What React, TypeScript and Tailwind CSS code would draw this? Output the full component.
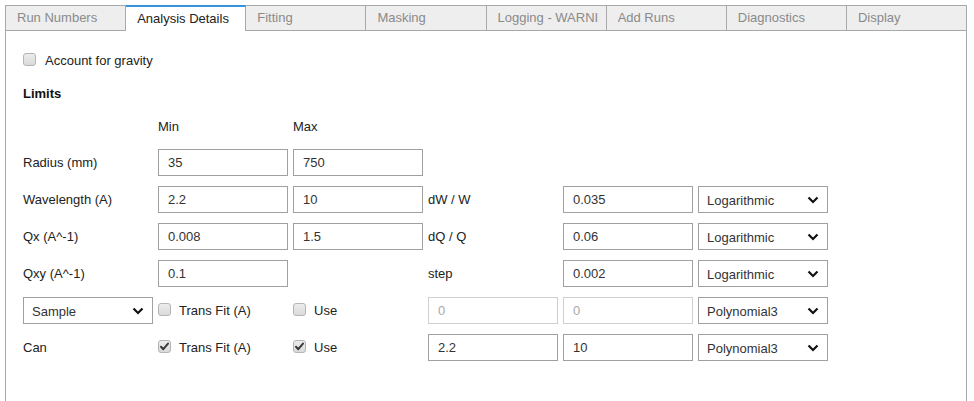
import React from "react";

/* ─── Data ───────────────────────────────────── */

const tabs = [
  "Run Numbers",
  "Analysis Details",
  "Fitting",
  "Masking",
  "Logging - WARNING",
  "Add Runs",
  "Diagnostics",
  "Display",
];

const ACTIVE = 1;

/* ─── Controls ───────────────────────────────── */

function Check({ checked = false }: { checked?: boolean }) {
  return (
    <span className="relative -mt-[3px] block h-[13px] w-[13px] shrink-0 rounded-[3px] border border-[#b4b4b4] bg-gradient-to-b from-[#ececec] to-[#dadada]">
      {checked && (
        <svg
          viewBox="0 0 13 13"
          className="absolute -left-px -top-px h-[13px] w-[13px]"
          aria-hidden
        >
          <path
            d="M3 6.8 L5.3 9.2 L10 3.6"
            fill="none"
            stroke="#3a3a3a"
            strokeWidth="2"
            strokeLinecap="round"
            strokeLinejoin="round"
          />
        </svg>
      )}
    </span>
  );
}

function Field({ value, disabled = false }: { value: string; disabled?: boolean }) {
  return (
    <div
      className={
        disabled
          ? "flex h-[27px] w-[130px] items-center border border-[#cfcfcf] bg-white pl-[9px] text-[13px] text-[#a8a8a8]"
          : "flex h-[27px] w-[130px] items-center border border-[#a0a0a0] bg-white pl-[9px] text-[13px] text-[#333]"
      }
    >
      {value}
    </div>
  );
}

function Select({ value }: { value: string }) {
  return (
    <div className="flex h-[27px] w-[130px] items-center justify-between border border-[#a0a0a0] bg-white pl-[8px] pr-[8px] text-[13px] text-[#333]">
      <span className="pt-[2px]">{value}</span>
      <svg viewBox="0 0 12 8" className="h-[8px] w-[12px]" aria-hidden>
        <path
          d="M1.5 1.5 L6 6 L10.5 1.5"
          fill="none"
          stroke="#111"
          strokeWidth="2.2"
        />
      </svg>
    </div>
  );
}

function Label({ children }: { children: React.ReactNode }) {
  return <div className="flex h-[27px] items-center text-[13px] text-[#222]">{children}</div>;
}

function CheckLabel({ text, checked = false }: { text: string; checked?: boolean }) {
  return (
    <div className="flex h-[27px] items-center gap-[8px] text-[13px] text-[#222]">
      <Check checked={checked} />
      <span>{text}</span>
    </div>
  );
}

/* ─── App ────────────────────────────────────── */

export default function App() {
  return (
    <div className="h-[401px] w-[974px] overflow-hidden bg-white px-[5px] pt-[5px] font-['Liberation_Sans',Arial,sans-serif]">
      <div className="flex w-[962px] flex-col">
        {/* Tab strip */}
        <div className="flex h-[26px]">
          {tabs.map((t, i) =>
            i === ACTIVE ? (
              <div
                key={t}
                className="flex flex-1 items-center overflow-hidden whitespace-nowrap border-t-2 border-r border-t-[#3592e0] border-r-[#a8a8a8] bg-white pl-[11px] pb-[1px] text-[13px] text-[#222]"
              >
                {t}
              </div>
            ) : (
              <div
                key={t}
                className={
                  i === 0
                    ? "flex flex-1 items-center overflow-hidden whitespace-nowrap border border-[#a8a8a8] bg-[#eeeeee] pl-[11px] text-[13px] text-[#8a8a8a]"
                    : "flex flex-1 items-center overflow-hidden whitespace-nowrap border-y border-r border-[#a8a8a8] bg-[#eeeeee] pl-[11px] text-[13px] text-[#8a8a8a]"
                }
              >
                <span className="block w-[101px] overflow-hidden">{t}</span>
              </div>
            )
          )}
        </div>

        {/* Panel */}
        <div className="flex h-[400px] flex-col border-x border-[#a8a8a8] pl-[17px] pt-[19px]">
          <div className="flex h-[22px] items-center gap-[9px] text-[13px] text-[#222]">
            <Check />
            <span>Account for gravity</span>
          </div>

          <div className="mt-[10px] flex h-[22px] items-center pt-[1px] text-[13px] font-bold text-[#111]">
            Limits
          </div>

          <div className="mt-[11px] grid h-[22px] grid-cols-[130px_130px_130px] items-center gap-x-[5px] pt-[1px] text-[13px] text-[#222]">
            <span />
            <span>Min</span>
            <span>Max</span>
          </div>

          <div className="mt-[12px] grid grid-cols-[130px_130px_130px_130px_130px_130px] gap-x-[5px] gap-y-[10px]">
            <Label>Radius (mm)</Label>
            <Field value="35" />
            <Field value="750" />
            <span />
            <span />
            <span />

            <Label>Wavelength (A)</Label>
            <Field value="2.2" />
            <Field value="10" />
            <Label>dW / W</Label>
            <Field value="0.035" />
            <Select value="Logarithmic" />

            <Label>Qx (A^-1)</Label>
            <Field value="0.008" />
            <Field value="1.5" />
            <Label>dQ / Q</Label>
            <Field value="0.06" />
            <Select value="Logarithmic" />

            <Label>Qxy (A^-1)</Label>
            <Field value="0.1" />
            <span />
            <Label>step</Label>
            <Field value="0.002" />
            <Select value="Logarithmic" />

            <Select value="Sample" />
            <CheckLabel text="Trans Fit (A)" />
            <CheckLabel text="Use" />
            <Field value="0" disabled />
            <Field value="0" disabled />
            <Select value="Polynomial3" />

            <Label>Can</Label>
            <CheckLabel text="Trans Fit (A)" checked />
            <CheckLabel text="Use" checked />
            <Field value="2.2" />
            <Field value="10" />
            <Select value="Polynomial3" />
          </div>
        </div>
      </div>
    </div>
  );
}
